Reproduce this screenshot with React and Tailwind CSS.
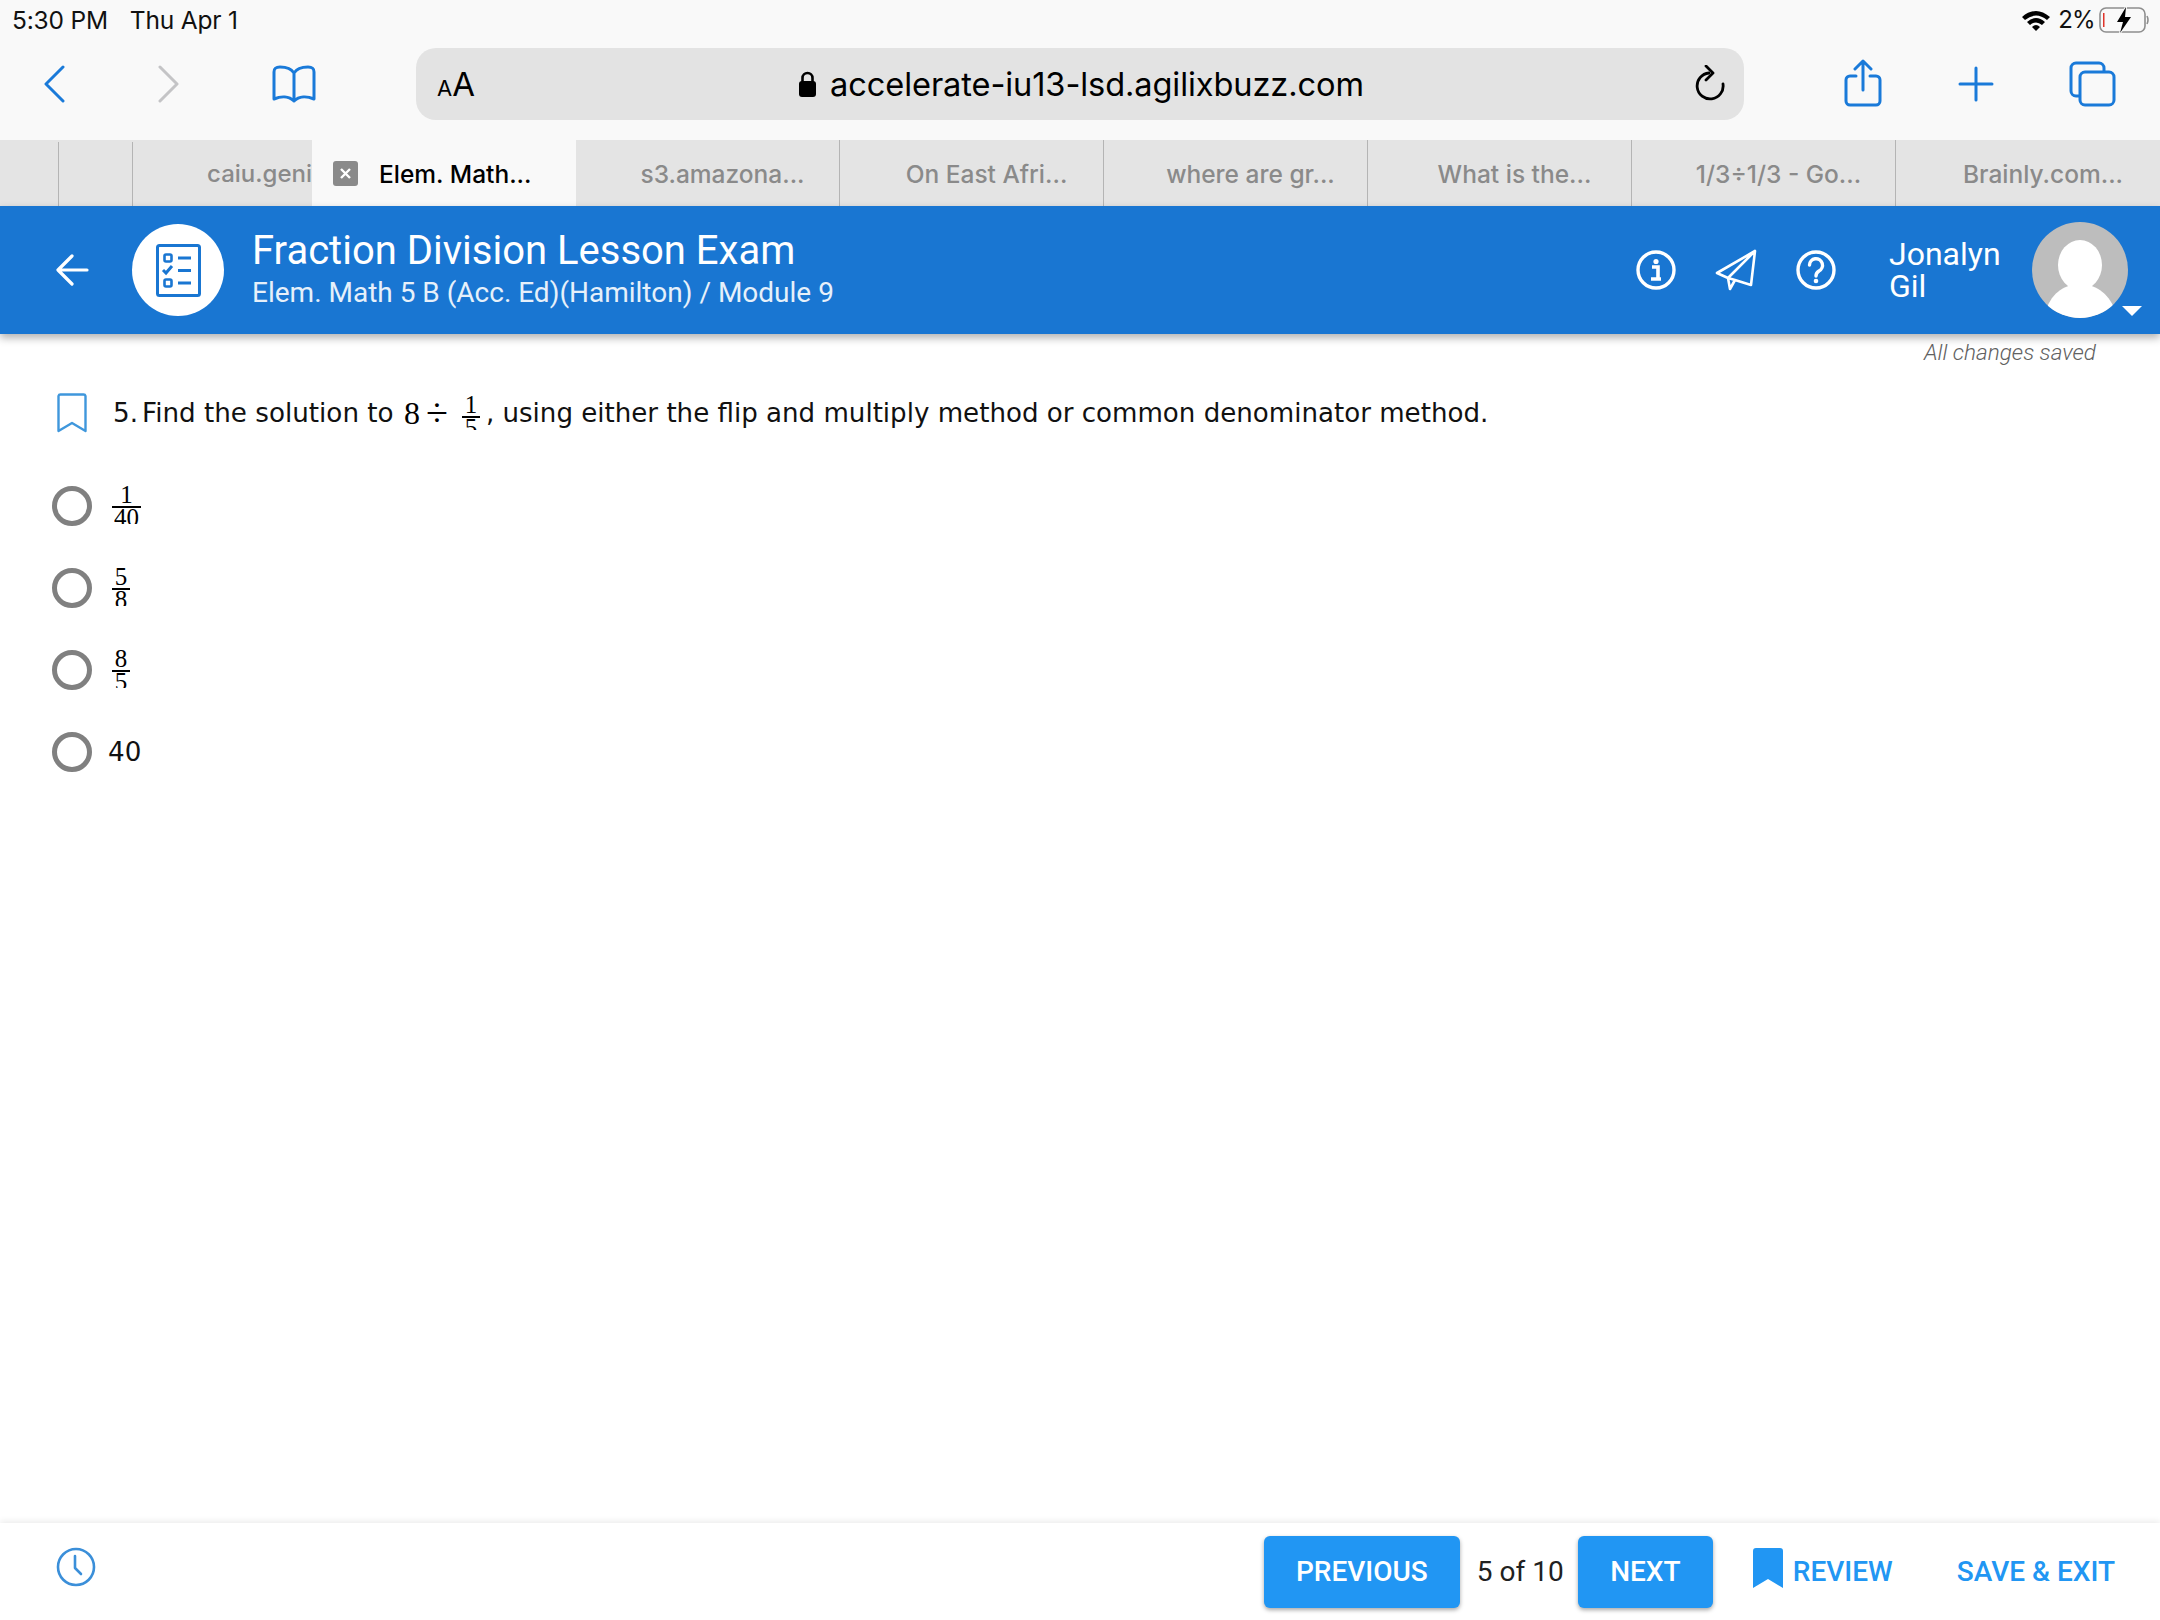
import React from 'react';

const ui = "font-['Inter',sans-serif]";
const roboto = "font-['Roboto',sans-serif]";

const tabs = ['s3.amazona...', 'On East Afri...', 'where are gr...', 'What is the...', '1/3÷1/3 - Go...', 'Brainly.com...'];

const Fraction = ({ top, bottom, width }) => (
  <span className={`flex flex-col items-center font-['Liberation_Serif',serif] text-[25px] text-black ${width}`}>
    <span className="block h-[20px] leading-[18px]">{top}</span>
    <span className="block h-[2px] w-full bg-black"></span>
    <span className="block h-[16px] overflow-hidden leading-[20px]">{bottom}</span>
  </span>
);

const Option = ({ children }) => (
  <div className="flex h-[40px] items-start">
    <span className="h-[40px] w-[40px] shrink-0 rounded-full border-[5px] border-[#808080]"></span>
    {children}
  </div>
);

const App = () => {
  return (
    <div className="flex h-[1620px] w-[2160px] flex-col overflow-hidden bg-white">
      {/* Safari chrome */}
      <div className={`bg-[#f9f9f9] ${ui}`}>
        <div className="flex h-[40px] items-center pl-[12px] pr-[12px] text-[24.5px] text-[#111]">
          <span className="tracking-[-0.2px]">5:30 PM</span>
          <span className="ml-[22px] tracking-[-0.2px]">Thu Apr 1</span>
          <svg className="ml-auto" width="30" height="22" viewBox="0 0 30 22">
            <path d="M1 8 Q15 -4 29 8 L26 11 Q15 2 4 11 Z M6 13 Q15 5 24 13 L21 16 Q15 11 9 16 Z M11 18 Q15 14 19 18 L15 22 Z" fill="#000" />
          </svg>
          <span className="ml-[7px] text-[24px] tracking-[-0.7px]">2%</span>
          <svg className="ml-[4px] mr-[-1px]" width="50" height="26" viewBox="0 0 50 26">
            <rect x="1" y="1" width="45" height="24" rx="6" fill="none" stroke="#8e8e8e" strokeWidth="1.6" />
            <rect x="4" y="6" width="1.5" height="14" fill="#e0352b" />
            <path d="M27 0 L18 15 H24 L21 26 L32 10 H26 Z" fill="#000" stroke="#f9f9f9" strokeWidth="2" paintOrder="stroke" />
            <path d="M48 9 Q50 13 48 17" fill="none" stroke="#8e8e8e" strokeWidth="1.6" />
          </svg>
        </div>

        <div className="flex h-[100px] items-start pl-[44px] pt-[8px]">
          <svg className="mt-[17px]" width="21" height="38" viewBox="0 0 21 38" fill="none" stroke="#1a7ad9" strokeWidth="3" strokeLinecap="round" strokeLinejoin="round">
            <path d="M19 2 L2 19 L19 36" />
          </svg>
          <svg className="ml-[93px] mt-[17px]" width="21" height="38" viewBox="0 0 21 38" fill="none" stroke="#c4c4c6" strokeWidth="3" strokeLinecap="round" strokeLinejoin="round">
            <path d="M2 2 L19 19 L2 36" />
          </svg>
          <svg className="ml-[93px] mt-[17px]" width="44" height="38" viewBox="0 0 44 38" fill="none" stroke="#1a7ad9" strokeWidth="3" strokeLinejoin="round" strokeLinecap="round">
            <path d="M22 8 C19 3 14 2 8 2 C4 2 2 3 2 7 V34 C9 31 17 31 22 36 C27 31 35 31 42 34 V7 C42 3 40 2 36 2 C30 2 25 3 22 8 Z M22 8 V36" />
          </svg>
          <div className="ml-[100px] grid h-[72px] w-[1328px] grid-cols-[1fr_auto_1fr] items-center rounded-[20px] bg-[#e3e3e3] pl-[21px] pr-[19px]">
            <span className="leading-none text-black">
              <span className="text-[22px]">A</span>
              <span className="text-[33px]">A</span>
            </span>
            <span className="flex items-center pt-[1px] text-[32.6px] tracking-[-0.1px] text-black">
              <svg className="mr-[13px]" width="19" height="26" viewBox="0 0 19 26">
                <path d="M4.5 11 V7 A5 5 0 0 1 14.5 7 V11" fill="none" stroke="#000" strokeWidth="2.6" />
                <rect x="1" y="10" width="17" height="16" rx="3" fill="#000" />
              </svg>
              accelerate-iu13-lsd.agilixbuzz.com
            </span>
            <svg className="justify-self-end" width="30" height="38" viewBox="0 0 30 38" fill="none" stroke="#000" strokeWidth="2.8" strokeLinecap="round" strokeLinejoin="round">
              <path d="M14 8 A13 13 0 1 0 28 19" />
              <path d="M11 1 L18 8 L11 15" />
            </svg>
          </div>
          <svg className="ml-[100px] mt-[11px]" width="38" height="48" viewBox="0 0 38 48" fill="none" stroke="#1a7ad9" strokeWidth="3" strokeLinecap="round" strokeLinejoin="round">
            <path d="M12 17 H6 A4 4 0 0 0 2 21 V42 A4 4 0 0 0 6 46 H32 A4 4 0 0 0 36 42 V21 A4 4 0 0 0 32 17 H26" />
            <path d="M19 31 V2 M11 10 L19 2 L27 10" />
          </svg>
          <svg className="ml-[76px] mt-[18px]" width="36" height="36" viewBox="0 0 36 36" fill="none" stroke="#1a7ad9" strokeWidth="3" strokeLinecap="round">
            <path d="M18 2 V34 M2 18 H34" />
          </svg>
          <svg className="ml-[75px] mt-[13px]" width="47" height="46" viewBox="0 0 47 46" fill="none" stroke="#1a7ad9" strokeWidth="3">
            <path d="M11 35 H7 A5 5 0 0 1 2 30 V7 A5 5 0 0 1 7 2 H30 A5 5 0 0 1 35 7 V11" />
            <rect x="11" y="11" width="34" height="33" rx="5" />
          </svg>
        </div>

        <div className="flex h-[66px] bg-[#e4e4e4] pt-[2px] text-[24.5px] font-medium text-[#8a8a8a]">
          <div className="w-[59px] border-r border-[#b4b4b4]"></div>
          <div className="w-[74px] border-r border-[#b4b4b4]"></div>
          <div className="flex w-[179px] items-center justify-end overflow-hidden whitespace-nowrap text-[24px]">caiu.geni</div>
          <div className="-mt-[2px] flex w-[264px] items-center bg-[#f9f9f9] pl-[21px] text-black">
            <span className="flex h-[25px] w-[25px] items-center justify-center rounded-[3px] bg-[#8a8a8a]">
              <svg width="13" height="13" viewBox="0 0 13 13" fill="none" stroke="#fff" strokeWidth="2.4">
                <path d="M2 2 L11 11 M11 2 L2 11" />
              </svg>
            </span>
            <span className="ml-[21px] mt-[2px]">Elem. Math...</span>
          </div>
          {tabs.map((tab, i) => (
            <div key={tab} className={`-mt-[2px] flex w-[264px] items-center justify-center whitespace-nowrap pl-[30px] pt-[2px] ${i < tabs.length - 1 ? 'border-r border-[#b4b4b4]' : ''}`}>
              {tab}
            </div>
          ))}
        </div>
      </div>

      {/* Exam header */}
      <div className={`z-10 flex h-[128px] shrink-0 items-center bg-[#1976d2] pl-[56px] text-white shadow-[0_4px_8px_rgba(0,0,0,0.3)] ${roboto}`}>
        <svg width="33" height="32" viewBox="0 0 33 32" fill="none" stroke="#fff" strokeWidth="3.2" strokeLinecap="round" strokeLinejoin="round">
          <path d="M31 16 H3 M16 2 L2 16 L16 30" />
        </svg>
        <div className="ml-[43px] flex h-[92px] w-[92px] items-center justify-center rounded-full bg-white">
          <svg width="45" height="53" viewBox="0 0 45 53" fill="none" stroke="#1976d2" strokeWidth="3">
            <rect x="1.5" y="1.5" width="42" height="50" rx="2" />
            <rect x="8.5" y="10.5" width="7" height="7" rx="1.5" strokeWidth="2.6" />
            <rect x="8.5" y="35.5" width="7" height="7" rx="1.5" strokeWidth="2.6" />
            <path d="M22 14 H35 M22 26.5 H35 M22 39 H35" />
            <path d="M7 26 L10 29 L16 22" />
          </svg>
        </div>
        <div className="ml-[28px] flex flex-col">
          <span className="text-[40px] leading-[46px]">Fraction Division Lesson Exam</span>
          <span className="text-[28px] leading-[38px] text-[#e6f0fa]">Elem. Math 5 B (Acc. Ed)(Hamilton) / Module 9</span>
        </div>
        <div className="ml-auto flex items-center pr-[32px]">
          <svg width="40" height="40" viewBox="0 0 40 40" fill="none" stroke="#fff" strokeWidth="3.4">
            <circle cx="20" cy="20" r="18" />
            <circle cx="20" cy="11.5" r="2.6" fill="#fff" stroke="none" />
            <path d="M16 17 H22 V28 M15 29 H25" strokeWidth="3.6" />
          </svg>
          <svg className="ml-[39px]" width="42" height="42" viewBox="0 0 42 42" fill="none" stroke="#fff" strokeWidth="2.6" strokeLinejoin="round">
            <path d="M40 2 L2 24 L13 29 L40 2 L36 36 L20 31 L13 29 L15 40 L20 31" />
          </svg>
          <svg className="ml-[39px]" width="40" height="40" viewBox="0 0 40 40" fill="none" stroke="#fff" strokeWidth="3.4">
            <circle cx="20" cy="20" r="18" />
            <path d="M13.5 15 A6.5 6.5 0 1 1 23 21 C21 22.3 20 23 20 26" strokeLinecap="round" />
            <circle cx="20" cy="31" r="2.3" fill="#fff" stroke="none" />
          </svg>
          <div className="ml-[53px] w-[143px] text-[32px] leading-[32px]">
            <div>Jonalyn</div>
            <div>Gil</div>
          </div>
          <div className="relative h-[96px] w-[96px]">
            <div className="h-[96px] w-[96px] overflow-hidden rounded-full bg-[#bdbdbd]">
              <svg width="96" height="96" viewBox="0 0 96 96" fill="#fff">
                <ellipse cx="48" cy="43" rx="22" ry="25" />
                <path d="M14 88 C20 70 34 62 48 62 C62 62 76 70 83 88 L83 96 H14 Z" />
              </svg>
            </div>
            <span className="absolute right-[-14px] top-[84px] h-0 w-0 border-x-[10px] border-t-[10px] border-x-transparent border-t-white"></span>
          </div>
        </div>
      </div>

      {/* Question */}
      <div className="min-h-0 flex-1">
        <div className={`h-[36px] pr-[64px] text-right text-[22.5px] font-light italic leading-[36px] text-[#616161] ${roboto}`}>
          All changes saved
        </div>
        <div className="mt-[23px] flex h-[40px] items-center pl-[57px] font-['DejaVu_Sans',sans-serif] text-[26.2px] text-[#111]">
          <svg className="shrink-0" width="30" height="40" viewBox="0 0 30 40" fill="none" stroke="#3f97dc" strokeWidth="2.4" strokeLinejoin="round">
            <path d="M1.5 3 A2 2 0 0 1 3.5 1.5 H26.5 A2 2 0 0 1 28.5 3 V38 L15 30 L1.5 38 Z" />
          </svg>
          <div className="ml-[26px] flex h-[40px] items-center whitespace-nowrap">
            <span className="mt-[2px]">5.</span>
            <span className="ml-[4px] mt-[2px] whitespace-pre">Find the solution to </span>
            <span className="ml-[2px] font-['Liberation_Serif',serif] text-[32px] leading-none text-black">8</span>
            <span className="ml-[6px] font-['Liberation_Serif',serif] text-[40px] leading-none text-black">÷</span>
            <span className="ml-[14px] mt-[3px] block h-[34px] self-start overflow-hidden"><Fraction top="1" bottom="5" width="w-[18px]" /></span>
            <span className="ml-[6px] mt-[2px] text-[26.1px]">, using either the flip and multiply method or common denominator method.</span>
          </div>
        </div>
        <div className="mt-[53px] flex flex-col gap-[42px] pl-[52px] font-['DejaVu_Sans',sans-serif] text-[26.2px] text-[#111]">
          <Option><span className="ml-[20px] block"><Fraction top="1" bottom="40" width="w-[29px]" /></span></Option>
          <Option><span className="ml-[20px] block"><Fraction top="5" bottom="8" width="w-[18px]" /></span></Option>
          <Option><span className="ml-[20px] block"><Fraction top="8" bottom="5" width="w-[18px]" /></span></Option>
          <Option><span className="ml-[16px] leading-[40px]">40</span></Option>
        </div>
      </div>

      {/* Footer */}
      <div className={`flex h-[97px] shrink-0 items-center bg-white pl-[56px] pr-[45px] shadow-[0_-2px_6px_rgba(0,0,0,0.08)] ${roboto}`}>
        <svg className="-mt-[10px]" width="40" height="40" viewBox="0 0 40 40" fill="none" stroke="#3b8fd9" strokeWidth="2.6" strokeLinecap="round" strokeLinejoin="round">
          <circle cx="20" cy="20" r="18" />
          <path d="M19 9 V21 L25 27" />
        </svg>
        <div className="ml-auto flex items-center text-[28px] font-medium">
          <button className="h-[72px] w-[196px] rounded-[6px] bg-[#2196f3] text-white shadow-[0_2px_4px_rgba(0,0,0,0.35)]">PREVIOUS</button>
          <span className="ml-[17px] w-[101px] text-[28px] font-normal text-[#212121]">5 of 10</span>
          <button className="h-[72px] w-[135px] rounded-[6px] bg-[#2196f3] text-white shadow-[0_2px_4px_rgba(0,0,0,0.35)]">NEXT</button>
          <svg className="-mt-[8px] ml-[40px]" width="30" height="40" viewBox="0 0 30 40" fill="#2196f3">
            <path d="M0 3 A3 3 0 0 1 3 0 H27 A3 3 0 0 1 30 3 V40 L15 31 L0 40 Z" />
          </svg>
          <span className="ml-[10px] text-[#2196f3]">REVIEW</span>
          <span className="ml-[64px] text-[#2196f3]">SAVE &amp; EXIT</span>
        </div>
      </div>
    </div>
  );
};

export default App;
